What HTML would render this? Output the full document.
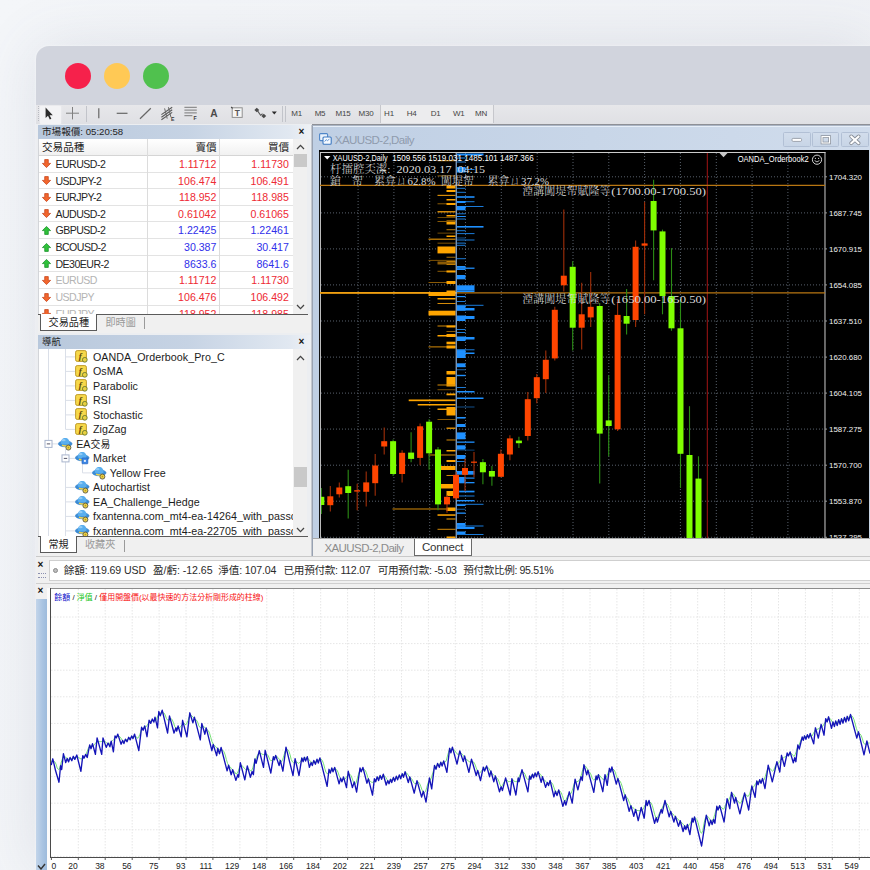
<!DOCTYPE html>
<html lang="zh-Hant">
<head>
<meta charset="utf-8">
<title>MT4 OANDA Orderbook</title>
<style>
html,body{margin:0;padding:0;background:#f2f4f7;}
body{width:870px;height:870px;overflow:hidden;position:relative;font-family:"Liberation Sans","Noto Sans CJK TC",sans-serif;color:#222;}
.abs{position:absolute;}
#root{position:absolute;left:0;top:0;width:870px;height:870px;overflow:hidden;background:linear-gradient(100deg,#f4f6f9 0%,#f2f4f7 40%,#eff1f5 100%);}
#win{position:absolute;left:36px;top:46px;width:834px;height:824px;border-top-left-radius:13px;background:#d1d4dd;box-shadow:0 0 3px rgba(255,255,255,.6),0 0 60px rgba(90,100,125,.14);}
.dot{position:absolute;width:26px;height:26px;border-radius:50%;top:63px;}
#toolbar{left:36px;top:104.5px;width:834px;height:19.5px;background:linear-gradient(180deg,#e7e7ea,#dfe0e4);}
.tf{position:absolute;top:108.5px;font-size:8px;color:#444;transform:translateX(-50%);white-space:nowrap;letter-spacing:-.2px;line-height:9px;}
.ptitle{position:absolute;left:38px;width:273px;height:14px;background:linear-gradient(90deg,#b8c8dc 0%,#c6d3e4 55%,#e1e8f1 92%,#eef1f5 100%);font-size:9.6px;line-height:14px;color:#1e1e1e;white-space:nowrap;}
.ptitle span{position:absolute;left:4px;top:0;}
.px{position:absolute;font-size:10px;font-weight:bold;color:#111;line-height:10px;}
.mw-row{position:absolute;left:38px;width:255px;height:16.65px;border-bottom:1px solid #e3e3e3;box-sizing:border-box;font-size:10.6px;line-height:16.4px;white-space:nowrap;background:#fff;color:#262626;}
.mw-row .sym{position:absolute;left:17.5px;top:0;letter-spacing:-.55px;}
.mw-row .bid{position:absolute;right:76.6px;top:0;}
.mw-row .ask{position:absolute;right:4.2px;top:0;}
.red{color:#ee2a33}.blu{color:#3030ea}.gry{color:#b4b4b4}
.tab-act{position:absolute;background:#fff;border:1px solid #5a5a5a;border-top:none;box-sizing:border-box;font-size:10.1px;text-align:center;white-space:nowrap;}
.tab-in{position:absolute;font-size:10.1px;color:#9a9a9a;white-space:nowrap;}
.nav-t{position:absolute;font-size:10.7px;line-height:14px;white-space:nowrap;color:#1c1c1c;letter-spacing:.05px;}
.sb{position:absolute;background:#f0f0f0;}
.thumb{position:absolute;background:#c9c9c9;}
</style>
</head>
<body>
<div id="root">
<div id="win"></div>
<div class="dot" style="left:65px;background:#f6214b"></div>
<div class="dot" style="left:104px;background:#ffc955"></div>
<div class="dot" style="left:142.5px;background:#50c14e"></div>

<!-- toolbar -->
<div id="toolbar" class="abs"></div>
<div class="abs" style="left:311px;top:123.6px;width:559px;height:1.2px;background:#8e9096"></div>
<div class="abs" style="left:40px;top:105.5px;width:21px;height:18px;background:#f3f3f5;border-radius:1px;box-shadow:0 0 2px #f3f3f5"></div>
<div class="abs" style="left:379.5px;top:105px;width:114px;height:18px;background:#ececee;border-left:1px solid #c6c7cc;border-right:1px solid #c6c7cc;box-sizing:border-box"></div>
<svg class="abs" style="left:36px;top:104px" width="270" height="20" viewBox="36 104 270 20">
<path d="M38.5 106v16" stroke="#b9bbc2" stroke-width="1" stroke-dasharray="1 1"/>
<path d="M86.5 106v16" stroke="#c2c4ca" stroke-width="1"/>
<path d="M282.5 106v16M285.5 106v16" stroke="#c2c4ca" stroke-width="1"/>
<path d="M45.6 107.6v10.4l2.4-2.2 1.8 3.8 1.6-.8-1.8-3.6h3.2z" fill="#2c2c2c"/>
<path d="M72.5 107v12.4M66 113.2h13" stroke="#808080" stroke-width="1"/>
<path d="M98.8 108.2v10" stroke="#666" stroke-width="1.2"/>
<path d="M116.7 113.3h10.8" stroke="#666" stroke-width="1.2"/>
<path d="M140 118.7l10.8-10.5" stroke="#666" stroke-width="1.2"/>
<path d="M161.4 114.6l10.8-7.4M161.4 117.2l10.8-7.4M161.4 119.8l10.8-7.4" stroke="#5a5a5a" stroke-width="1.15"/>
<path d="M164.6 108.4l2.6 10.2M168.4 107.2l2.6 10.2" stroke="#6a6a6a" stroke-width="1"/>
<text x="171" y="120.6" font-family='"Liberation Sans","Noto Sans CJK TC",sans-serif' font-size="5.2" font-weight="bold" fill="#3a3a3a">E</text>
<path d="M184.4 107.3h12.4M184.4 110.1h12.4M184.4 112.9h12.4M184.4 115.7h8" stroke="#7a7a7a" stroke-width="1"/>
<text x="193.4" y="120.2" font-family='"Liberation Sans","Noto Sans CJK TC",sans-serif' font-size="5.2" font-weight="bold" fill="#3a3a3a">F</text>
<text x="213.9" y="117.2" text-anchor="middle" font-family='"Liberation Sans","Noto Sans CJK TC",sans-serif' font-size="10.2" font-weight="bold" fill="#4a4a4a">A</text>
<rect x="232.2" y="107.8" width="10" height="9.6" fill="#f6f6f6" stroke="#909090" stroke-width="1"/>
<text x="237.2" y="116" text-anchor="middle" font-family='"Liberation Sans","Noto Sans CJK TC",sans-serif' font-size="8.4" font-weight="bold" fill="#555">T</text>
<path d="M231.2 107l1.4 1.4" stroke="#444" stroke-width="1.2"/>
<path d="M254.4 110l2.4-2.2 2.4 2.2-2.4 2.2z" fill="#4a4a4a"/><path d="M261.4 116l2.4-2.2 2.4 2.2-2.4 2.2z" fill="#4a4a4a"/>
<path d="M257.4 110.6l3.2 4.6 2-1.4" stroke="#5a5a5a" stroke-width="1.1" fill="none"/>
<path d="M271.8 111.6h5l-2.5 2.8z" fill="#2a2a2a"/>
</svg>
<div class="tf" style="left:296.7px">M1</div>
<div class="tf" style="left:320px">M5</div>
<div class="tf" style="left:343px">M15</div>
<div class="tf" style="left:366px">M30</div>
<div class="tf" style="left:389px">H1</div>
<div class="tf" style="left:411.7px">H4</div>
<div class="tf" style="left:435.7px">D1</div>
<div class="tf" style="left:458.7px">W1</div>
<div class="tf" style="left:481px">MN</div>

<!-- market watch -->
<div class="abs" style="left:36px;top:124px;width:275.5px;height:432px;background:#eceef1"></div>
<div class="ptitle" style="top:125.2px;height:13.4px"><span>市場報價: 05:20:58</span></div>
<div class="px" style="left:298.6px;top:127.4px">×</div>
<div class="abs" style="left:38px;top:138.8px;width:255.3px;height:17.1px;background:linear-gradient(180deg,#fff,#f1f1f1);border-bottom:1px solid #d5d5d5;box-sizing:border-box;font-size:10.6px;line-height:17px;white-space:nowrap"><span class="abs" style="left:4px">交易品種</span><span class="abs" style="right:76.6px">賣價</span><span class="abs" style="right:4.2px">買價</span></div>
<div class="abs" style="left:0;top:155.9px;width:311px;height:158.2px;overflow:hidden">
<div class="mw-row" style="top:0.00px"><svg class="abs" style="left:4px;top:3.6px" width="9" height="9" viewBox="0 0 9 9"><path d="M4.5 8.6L.4 4.4H2.7V.6H6.3V4.4H8.6z" fill="#f2662c" stroke="#c23a10" stroke-width=".7"/></svg><span class="sym">EURUSD-2</span><span class="bid red">1.11712</span><span class="ask red">1.11730</span></div>
<div class="mw-row" style="top:16.65px"><svg class="abs" style="left:4px;top:3.6px" width="9" height="9" viewBox="0 0 9 9"><path d="M4.5 8.6L.4 4.4H2.7V.6H6.3V4.4H8.6z" fill="#f2662c" stroke="#c23a10" stroke-width=".7"/></svg><span class="sym">USDJPY-2</span><span class="bid red">106.474</span><span class="ask red">106.491</span></div>
<div class="mw-row" style="top:33.30px"><svg class="abs" style="left:4px;top:3.6px" width="9" height="9" viewBox="0 0 9 9"><path d="M4.5 8.6L.4 4.4H2.7V.6H6.3V4.4H8.6z" fill="#f2662c" stroke="#c23a10" stroke-width=".7"/></svg><span class="sym">EURJPY-2</span><span class="bid red">118.952</span><span class="ask red">118.985</span></div>
<div class="mw-row" style="top:49.95px"><svg class="abs" style="left:4px;top:3.6px" width="9" height="9" viewBox="0 0 9 9"><path d="M4.5 8.6L.4 4.4H2.7V.6H6.3V4.4H8.6z" fill="#f2662c" stroke="#c23a10" stroke-width=".7"/></svg><span class="sym">AUDUSD-2</span><span class="bid red">0.61042</span><span class="ask red">0.61065</span></div>
<div class="mw-row" style="top:66.60px"><svg class="abs" style="left:4px;top:3.6px" width="9" height="9" viewBox="0 0 9 9"><path d="M4.5 .4L8.6 4.6H6.3V8.4H2.7V4.6H.4z" fill="#2fc23a" stroke="#118a22" stroke-width=".7"/></svg><span class="sym">GBPUSD-2</span><span class="bid blu">1.22425</span><span class="ask blu">1.22461</span></div>
<div class="mw-row" style="top:83.25px"><svg class="abs" style="left:4px;top:3.6px" width="9" height="9" viewBox="0 0 9 9"><path d="M4.5 .4L8.6 4.6H6.3V8.4H2.7V4.6H.4z" fill="#2fc23a" stroke="#118a22" stroke-width=".7"/></svg><span class="sym">BCOUSD-2</span><span class="bid blu">30.387</span><span class="ask blu">30.417</span></div>
<div class="mw-row" style="top:99.90px"><svg class="abs" style="left:4px;top:3.6px" width="9" height="9" viewBox="0 0 9 9"><path d="M4.5 .4L8.6 4.6H6.3V8.4H2.7V4.6H.4z" fill="#2fc23a" stroke="#118a22" stroke-width=".7"/></svg><span class="sym">DE30EUR-2</span><span class="bid blu">8633.6</span><span class="ask blu">8641.6</span></div>
<div class="mw-row" style="top:116.55px"><svg class="abs" style="left:4px;top:3.6px" width="9" height="9" viewBox="0 0 9 9"><path d="M4.5 8.6L.4 4.4H2.7V.6H6.3V4.4H8.6z" fill="#f2662c" stroke="#c23a10" stroke-width=".7"/></svg><span class="sym gry">EURUSD</span><span class="bid red">1.11712</span><span class="ask red">1.11730</span></div>
<div class="mw-row" style="top:133.20px"><svg class="abs" style="left:4px;top:3.6px" width="9" height="9" viewBox="0 0 9 9"><path d="M4.5 8.6L.4 4.4H2.7V.6H6.3V4.4H8.6z" fill="#f2662c" stroke="#c23a10" stroke-width=".7"/></svg><span class="sym gry">USDJPY</span><span class="bid red">106.476</span><span class="ask red">106.492</span></div>
<div class="mw-row" style="top:149.85px"><svg class="abs" style="left:4px;top:3.6px" width="9" height="9" viewBox="0 0 9 9"><path d="M4.5 8.6L.4 4.4H2.7V.6H6.3V4.4H8.6z" fill="#f2662c" stroke="#c23a10" stroke-width=".7"/></svg><span class="sym gry">EURJPY</span><span class="bid red">118.952</span><span class="ask red">118.985</span></div>
</div>
<div class="abs" style="left:147.4px;top:139px;width:1px;height:175px;background:#dcdcdc"></div>
<div class="abs" style="left:219.4px;top:139px;width:1px;height:175px;background:#dcdcdc"></div>
<div class="sb" style="left:293.3px;top:138.8px;width:13.8px;height:175.5px"></div>
<div class="thumb" style="left:294px;top:154px;width:12.6px;height:13px"></div>
<svg class="abs" style="left:296px;top:143px" width="9" height="8" viewBox="0 0 9 8"><path d="M1 6l3.5-3.6L8 6" fill="none" stroke="#444" stroke-width="1.3"/></svg>
<svg class="abs" style="left:296px;top:302.5px" width="9" height="8" viewBox="0 0 9 8"><path d="M1 2l3.5 3.6L8 2" fill="none" stroke="#444" stroke-width="1.3"/></svg>
<div class="abs" style="left:38px;top:314.3px;width:273px;height:18.5px;background:#f0f0f0"></div>
<div class="abs" style="left:38px;top:313.8px;width:269.5px;height:1px;background:#5a5a5a"></div>
<div class="tab-act" style="left:40.3px;top:313.8px;width:57px;height:16.9px;line-height:17px">交易品種</div>
<div class="tab-in" style="left:105.5px;top:316px;line-height:14px">即時圖</div>
<div class="abs" style="left:144px;top:317px;width:1px;height:12px;background:#9a9a9a"></div>

<!-- navigator -->
<div class="ptitle" style="top:335.3px;height:13.6px"><span>導航</span></div>
<div class="px" style="left:298.6px;top:337px">×</div>
<div class="abs" style="left:38px;top:349px;width:255.3px;height:187px;background:#fff;overflow:hidden"></div>
<svg class="abs" style="left:38px;top:349px" width="256" height="187" viewBox="38 349 256 187"><g stroke="#dadfe8" stroke-width="1" fill="none"><path d="M65.5 349V429.4M65.5 356.9H75M65.5 371.4H75M65.5 385.9H75M65.5 400.4H75M65.5 414.9H75M65.5 429.4H75"/><path d="M48.5 349V536M52 443.9H58"/><path d="M65.5 449V536M69 458.4H75M82.5 464V472.9H92M65.5 487.4H75M65.5 501.9H75M65.5 516.4H75M65.5 530.9H75"/></g><rect x="45" y="440.4" width="7" height="7" fill="#fff" stroke="#a8b4cc" stroke-width="1"/><path d="M46.8 443.9h3.4" stroke="#556" stroke-width="1"/><rect x="62" y="454.9" width="7" height="7" fill="#fff" stroke="#a8b4cc" stroke-width="1"/><path d="M63.8 458.4h3.4" stroke="#556" stroke-width="1"/></svg>
<div class="abs" style="left:0;top:349px;width:293.3px;height:187px;overflow:hidden">
<svg class="abs" style="left:75px;top:1.3999999999999773px" width="13" height="13" viewBox="0 0 13 13"><rect x=".6" y=".6" width="10.8" height="10.8" rx="1.6" fill="#f7d84a" stroke="#b89420" stroke-width=".9"/><text x="5.2" y="9" text-anchor="middle" font-family='"Liberation Serif",serif' font-style="italic" font-weight="bold" font-size="9" fill="#5a4608">f</text><circle cx="9.8" cy="9.8" r="2.4" fill="#e8d040" stroke="#6a7a30" stroke-width=".9"/></svg>
<div class="nav-t" style="left:93px;top:0.5px">OANDA_Orderbook_Pro_C</div>
<svg class="abs" style="left:75px;top:15.899999999999977px" width="13" height="13" viewBox="0 0 13 13"><rect x=".6" y=".6" width="10.8" height="10.8" rx="1.6" fill="#f7d84a" stroke="#b89420" stroke-width=".9"/><text x="5.2" y="9" text-anchor="middle" font-family='"Liberation Serif",serif' font-style="italic" font-weight="bold" font-size="9" fill="#5a4608">f</text><circle cx="9.8" cy="9.8" r="2.4" fill="#e8d040" stroke="#6a7a30" stroke-width=".9"/></svg>
<div class="nav-t" style="left:93px;top:15.0px">OsMA</div>
<svg class="abs" style="left:75px;top:30.399999999999977px" width="13" height="13" viewBox="0 0 13 13"><rect x=".6" y=".6" width="10.8" height="10.8" rx="1.6" fill="#f7d84a" stroke="#b89420" stroke-width=".9"/><text x="5.2" y="9" text-anchor="middle" font-family='"Liberation Serif",serif' font-style="italic" font-weight="bold" font-size="9" fill="#5a4608">f</text><circle cx="9.8" cy="9.8" r="2.4" fill="#e8d040" stroke="#6a7a30" stroke-width=".9"/></svg>
<div class="nav-t" style="left:93px;top:29.5px">Parabolic</div>
<svg class="abs" style="left:75px;top:44.89999999999998px" width="13" height="13" viewBox="0 0 13 13"><rect x=".6" y=".6" width="10.8" height="10.8" rx="1.6" fill="#f7d84a" stroke="#b89420" stroke-width=".9"/><text x="5.2" y="9" text-anchor="middle" font-family='"Liberation Serif",serif' font-style="italic" font-weight="bold" font-size="9" fill="#5a4608">f</text><circle cx="9.8" cy="9.8" r="2.4" fill="#e8d040" stroke="#6a7a30" stroke-width=".9"/></svg>
<div class="nav-t" style="left:93px;top:44.0px">RSI</div>
<svg class="abs" style="left:75px;top:59.39999999999998px" width="13" height="13" viewBox="0 0 13 13"><rect x=".6" y=".6" width="10.8" height="10.8" rx="1.6" fill="#f7d84a" stroke="#b89420" stroke-width=".9"/><text x="5.2" y="9" text-anchor="middle" font-family='"Liberation Serif",serif' font-style="italic" font-weight="bold" font-size="9" fill="#5a4608">f</text><circle cx="9.8" cy="9.8" r="2.4" fill="#e8d040" stroke="#6a7a30" stroke-width=".9"/></svg>
<div class="nav-t" style="left:93px;top:58.5px">Stochastic</div>
<svg class="abs" style="left:75px;top:73.89999999999998px" width="13" height="13" viewBox="0 0 13 13"><rect x=".6" y=".6" width="10.8" height="10.8" rx="1.6" fill="#f7d84a" stroke="#b89420" stroke-width=".9"/><text x="5.2" y="9" text-anchor="middle" font-family='"Liberation Serif",serif' font-style="italic" font-weight="bold" font-size="9" fill="#5a4608">f</text><circle cx="9.8" cy="9.8" r="2.4" fill="#e8d040" stroke="#6a7a30" stroke-width=".9"/></svg>
<div class="nav-t" style="left:93px;top:73.0px">ZigZag</div>
<svg class="abs" style="left:58px;top:87.89999999999998px" width="15" height="14" viewBox="0 0 15 14"><ellipse cx="7.2" cy="6.8" rx="6.9" ry="3" fill="#3a8cd6" stroke="#2a78c4" stroke-width=".5"/><path d="M2.8 6.4C2.6 3 4.6 1 7.2 1s4.6 2 4.4 5.4c-1.6 1.3-7.200 1.300-8.800 0z" fill="#59aeee"/><ellipse cx="5.6" cy="3.2" rx="2" ry="1.1" fill="#9fd2f8" opacity=".8"/><path d="M4 8.200c1.800.9 4.600.9 6.400 0" stroke="#eed24c" stroke-width="1.400" fill="none"/><circle cx="10.4" cy="10.6" r="2.5" fill="#ecd044" stroke="#5c5a48" stroke-width=".9"/><circle cx="10.4" cy="10.6" r=".8" fill="#b89a20"/></svg>
<div class="nav-t" style="left:76.2px;top:87.5px">EA<span style="font-size:9.8px">交易</span></div>
<svg class="abs" style="left:75px;top:102.39999999999998px" width="15" height="14" viewBox="0 0 15 14"><ellipse cx="7.2" cy="6.8" rx="6.9" ry="3" fill="#3a8cd6" stroke="#2a78c4" stroke-width=".5"/><path d="M2.8 6.4C2.6 3 4.6 1 7.2 1s4.6 2 4.4 5.4c-1.6 1.3-7.200 1.300-8.800 0z" fill="#59aeee"/><ellipse cx="5.6" cy="3.2" rx="2" ry="1.1" fill="#9fd2f8" opacity=".8"/><path d="M4 8.200c1.800.9 4.600.9 6.400 0" stroke="#eed24c" stroke-width="1.400" fill="none"/><rect x="7" y="7" width="5.8" height="5.8" rx=".6" fill="#3a86e4" stroke="#2060c0" stroke-width=".7"/><rect x="8.9" y="8.9" width="2" height="2" fill="#e6eefc"/></svg>
<div class="nav-t" style="left:93px;top:102.0px">Market</div>
<svg class="abs" style="left:91.6px;top:116.89999999999998px" width="15" height="14" viewBox="0 0 15 14"><ellipse cx="7.2" cy="6.8" rx="6.9" ry="3" fill="#3a8cd6" stroke="#2a78c4" stroke-width=".5"/><path d="M2.8 6.4C2.6 3 4.6 1 7.2 1s4.6 2 4.4 5.4c-1.6 1.3-7.200 1.300-8.800 0z" fill="#59aeee"/><ellipse cx="5.6" cy="3.2" rx="2" ry="1.1" fill="#9fd2f8" opacity=".8"/><path d="M4 8.200c1.800.9 4.600.9 6.400 0" stroke="#eed24c" stroke-width="1.400" fill="none"/><circle cx="10.4" cy="10.6" r="2.5" fill="#ecd044" stroke="#5c5a48" stroke-width=".9"/><circle cx="10.4" cy="10.6" r=".8" fill="#b89a20"/></svg>
<div class="nav-t" style="left:109.7px;top:116.5px">Yellow Free</div>
<svg class="abs" style="left:75px;top:131.39999999999998px" width="15" height="14" viewBox="0 0 15 14"><ellipse cx="7.2" cy="6.8" rx="6.9" ry="3" fill="#3a8cd6" stroke="#2a78c4" stroke-width=".5"/><path d="M2.8 6.4C2.6 3 4.6 1 7.2 1s4.6 2 4.4 5.4c-1.6 1.3-7.200 1.300-8.800 0z" fill="#59aeee"/><ellipse cx="5.6" cy="3.2" rx="2" ry="1.1" fill="#9fd2f8" opacity=".8"/><path d="M4 8.200c1.800.9 4.600.9 6.400 0" stroke="#eed24c" stroke-width="1.400" fill="none"/><circle cx="10.4" cy="10.6" r="2.5" fill="#ecd044" stroke="#5c5a48" stroke-width=".9"/><circle cx="10.4" cy="10.6" r=".8" fill="#b89a20"/></svg>
<div class="nav-t" style="left:93px;top:131.0px">Autochartist</div>
<svg class="abs" style="left:75px;top:145.89999999999998px" width="15" height="14" viewBox="0 0 15 14"><ellipse cx="7.2" cy="6.8" rx="6.9" ry="3" fill="#3a8cd6" stroke="#2a78c4" stroke-width=".5"/><path d="M2.8 6.4C2.6 3 4.6 1 7.2 1s4.6 2 4.4 5.4c-1.6 1.3-7.200 1.300-8.800 0z" fill="#59aeee"/><ellipse cx="5.6" cy="3.2" rx="2" ry="1.1" fill="#9fd2f8" opacity=".8"/><path d="M4 8.200c1.800.9 4.600.9 6.400 0" stroke="#eed24c" stroke-width="1.400" fill="none"/><circle cx="10.4" cy="10.6" r="2.5" fill="#ecd044" stroke="#5c5a48" stroke-width=".9"/><circle cx="10.4" cy="10.6" r=".8" fill="#b89a20"/></svg>
<div class="nav-t" style="left:93px;top:145.5px">EA_Challenge_Hedge</div>
<svg class="abs" style="left:75px;top:160.39999999999998px" width="15" height="14" viewBox="0 0 15 14"><ellipse cx="7.2" cy="6.8" rx="6.9" ry="3" fill="#3a8cd6" stroke="#2a78c4" stroke-width=".5"/><path d="M2.8 6.4C2.6 3 4.6 1 7.2 1s4.6 2 4.4 5.4c-1.6 1.3-7.200 1.300-8.800 0z" fill="#59aeee"/><ellipse cx="5.6" cy="3.2" rx="2" ry="1.1" fill="#9fd2f8" opacity=".8"/><path d="M4 8.200c1.800.9 4.600.9 6.400 0" stroke="#eed24c" stroke-width="1.400" fill="none"/><circle cx="10.4" cy="10.6" r="2.5" fill="#ecd044" stroke="#5c5a48" stroke-width=".9"/><circle cx="10.4" cy="10.6" r=".8" fill="#b89a20"/></svg>
<div class="nav-t" style="left:93px;top:160.0px">fxantenna.com_mt4-ea-14264_with_passc</div>
<svg class="abs" style="left:75px;top:174.89999999999998px" width="15" height="14" viewBox="0 0 15 14"><ellipse cx="7.2" cy="6.8" rx="6.9" ry="3" fill="#3a8cd6" stroke="#2a78c4" stroke-width=".5"/><path d="M2.8 6.4C2.6 3 4.6 1 7.2 1s4.6 2 4.4 5.4c-1.6 1.3-7.200 1.300-8.800 0z" fill="#59aeee"/><ellipse cx="5.6" cy="3.2" rx="2" ry="1.1" fill="#9fd2f8" opacity=".8"/><path d="M4 8.200c1.800.9 4.600.9 6.400 0" stroke="#eed24c" stroke-width="1.400" fill="none"/><circle cx="10.4" cy="10.6" r="2.5" fill="#ecd044" stroke="#5c5a48" stroke-width=".9"/><circle cx="10.4" cy="10.6" r=".8" fill="#b89a20"/></svg>
<div class="nav-t" style="left:93px;top:174.5px">fxantenna.com_mt4-ea-22705_with_passc</div>
</div>
<div class="sb" style="left:293.3px;top:349px;width:13.8px;height:187px"></div>
<div class="thumb" style="left:294px;top:466.5px;width:12.6px;height:20px"></div>
<svg class="abs" style="left:296px;top:353.5px" width="9" height="8" viewBox="0 0 9 8"><path d="M1 6l3.5-3.6L8 6" fill="none" stroke="#444" stroke-width="1.3"/></svg>
<svg class="abs" style="left:296px;top:525.5px" width="9" height="8" viewBox="0 0 9 8"><path d="M1 2l3.5 3.6L8 2" fill="none" stroke="#444" stroke-width="1.3"/></svg>
<div class="abs" style="left:38px;top:536px;width:273px;height:19.5px;background:#f0f0f0"></div>
<div class="abs" style="left:38px;top:535.6px;width:269.5px;height:1px;background:#5a5a5a"></div>
<div class="tab-act" style="left:40px;top:535.6px;width:37px;height:17.2px;line-height:17.4px">常規</div>
<div class="tab-in" style="left:85px;top:537.5px;line-height:14px">收藏夾</div>
<div class="abs" style="left:124px;top:539.5px;width:1px;height:12px;background:#9a9a9a"></div>
<div class="abs" style="left:37.7px;top:139px;width:1px;height:175px;background:#d3d5d9"></div>
<div class="abs" style="left:37.7px;top:349px;width:1px;height:187px;background:#d3d5d9"></div>
<div class="abs" style="left:310.6px;top:124.6px;width:1px;height:431px;background:#c3c7cf"></div>

<!-- chart window -->
<div class="abs" style="left:311.6px;top:124.6px;width:559px;height:432px;background:linear-gradient(90deg,#bfcfe4 0%,#c8d6e8 50%,#d0dcec 100%);border-left:1px solid #98a2b2;border-top:1px solid #a9b4c4;box-sizing:border-box"></div>
<div class="abs" style="left:312.6px;top:125.6px;width:558px;height:1px;background:#e6eef8"></div>
<svg class="abs" style="left:318.5px;top:133px" width="13" height="12" viewBox="0 0 13 12"><rect x=".6" y=".6" width="8" height="7" rx="1" fill="#eaf2fc" stroke="#4f86c8" stroke-width="1.1"/><rect x="4" y="4" width="8.2" height="7.2" rx="1" fill="#f6faff" stroke="#3d78c0" stroke-width="1.1"/><path d="M5.6 8.6l1.6-2 1.4 1.2 1.8-2" stroke="#5a8fd0" stroke-width=".9" fill="none"/></svg>
<div class="abs" style="left:334.8px;top:132.6px;font-size:11.5px;line-height:14px;color:#8f9bad;white-space:nowrap;letter-spacing:-.56px" id="ctitle">XAUUSD-2,Daily</div>
<div class="abs" style="left:783.4px;top:132px;width:27.2px;height:15.2px;background:linear-gradient(180deg,#d2ddec,#c8d5e6);border:1px solid #b2c0d5;border-radius:1.5px;box-sizing:border-box"></div>
<div class="abs" style="left:812.4px;top:132px;width:27px;height:15.2px;background:linear-gradient(180deg,#d2ddec,#c8d5e6);border:1px solid #b2c0d5;border-radius:1.5px;box-sizing:border-box"></div>
<div class="abs" style="left:841px;top:132px;width:27.6px;height:15.2px;background:linear-gradient(180deg,#d2ddec,#c8d5e6);border:1px solid #b2c0d5;border-radius:1.5px;box-sizing:border-box"></div>
<svg class="abs" style="left:783px;top:132px" width="87" height="16" viewBox="783 132 87 16"><rect x="792" y="138.4" width="9.6" height="3" rx="1.2" fill="#fff" stroke="#8a909a" stroke-width=".8"/><rect x="822" y="136.6" width="7.6" height="6.4" fill="none" stroke="#868c96" stroke-width="2.6"/><rect x="822" y="136.6" width="7.6" height="6.4" fill="none" stroke="#fff" stroke-width="1.2"/><path d="M851.2 136.4l7.4 6.8M858.6 136.4l-7.4 6.8" stroke="#868c96" stroke-width="3.8" stroke-linecap="round"/><path d="M851.2 136.4l7.4 6.8M858.6 136.4l-7.4 6.8" stroke="#fff" stroke-width="2.1" stroke-linecap="round"/></svg>
<svg class="abs" style="left:319px;top:150px" width="551" height="388.4" viewBox="319 150 551 388.4">
<rect x="319" y="150" width="551" height="388.4" fill="#000"/>
<path d="M787.9 153V539 M752.1 153V539 M716.3 153V539 M680.4 153V539 M644.6 153V539 M608.8 153V539 M573.0 153V539 M537.2 153V539 M501.3 153V539 M465.5 153V539 M429.7 153V539 M393.9 153V539 M358.1 153V539 M321 176.8H825 M321 212.9H825 M321 248.9H825 M321 284.9H825 M321 321.0H825 M321 357.1H825 M321 393.1H825 M321 429.1H825 M321 465.2H825 M321 501.2H825 M321 537.3H825" stroke="#59626d" stroke-width="1" stroke-dasharray="1 2" fill="none"/>
<path d="M320 152.5H825.5M825 152V539M320.4 152V539" stroke="#cfcfcf" stroke-width="1" fill="none"/>
<path d="M825 176.8h2" stroke="#9a9a9a" stroke-width="1"/>
<text x="829" y="179.8" font-family='"Liberation Sans","Noto Sans CJK TC",sans-serif' font-size="7.9" fill="#f0f0f0" textLength="33" lengthAdjust="spacingAndGlyphs">1704.320</text>
<path d="M825 212.9h2" stroke="#9a9a9a" stroke-width="1"/>
<text x="829" y="215.9" font-family='"Liberation Sans","Noto Sans CJK TC",sans-serif' font-size="7.9" fill="#f0f0f0" textLength="33" lengthAdjust="spacingAndGlyphs">1687.745</text>
<path d="M825 248.9h2" stroke="#9a9a9a" stroke-width="1"/>
<text x="829" y="251.9" font-family='"Liberation Sans","Noto Sans CJK TC",sans-serif' font-size="7.9" fill="#f0f0f0" textLength="33" lengthAdjust="spacingAndGlyphs">1670.915</text>
<path d="M825 284.9h2" stroke="#9a9a9a" stroke-width="1"/>
<text x="829" y="287.9" font-family='"Liberation Sans","Noto Sans CJK TC",sans-serif' font-size="7.9" fill="#f0f0f0" textLength="33" lengthAdjust="spacingAndGlyphs">1654.085</text>
<path d="M825 321.0h2" stroke="#9a9a9a" stroke-width="1"/>
<text x="829" y="324.0" font-family='"Liberation Sans","Noto Sans CJK TC",sans-serif' font-size="7.9" fill="#f0f0f0" textLength="33" lengthAdjust="spacingAndGlyphs">1637.510</text>
<path d="M825 357.1h2" stroke="#9a9a9a" stroke-width="1"/>
<text x="829" y="360.1" font-family='"Liberation Sans","Noto Sans CJK TC",sans-serif' font-size="7.9" fill="#f0f0f0" textLength="33" lengthAdjust="spacingAndGlyphs">1620.680</text>
<path d="M825 393.1h2" stroke="#9a9a9a" stroke-width="1"/>
<text x="829" y="396.1" font-family='"Liberation Sans","Noto Sans CJK TC",sans-serif' font-size="7.9" fill="#f0f0f0" textLength="33" lengthAdjust="spacingAndGlyphs">1604.105</text>
<path d="M825 429.1h2" stroke="#9a9a9a" stroke-width="1"/>
<text x="829" y="432.1" font-family='"Liberation Sans","Noto Sans CJK TC",sans-serif' font-size="7.9" fill="#f0f0f0" textLength="33" lengthAdjust="spacingAndGlyphs">1587.275</text>
<path d="M825 465.2h2" stroke="#9a9a9a" stroke-width="1"/>
<text x="829" y="468.2" font-family='"Liberation Sans","Noto Sans CJK TC",sans-serif' font-size="7.9" fill="#f0f0f0" textLength="33" lengthAdjust="spacingAndGlyphs">1570.700</text>
<path d="M825 501.2h2" stroke="#9a9a9a" stroke-width="1"/>
<text x="829" y="504.2" font-family='"Liberation Sans","Noto Sans CJK TC",sans-serif' font-size="7.9" fill="#f0f0f0" textLength="33" lengthAdjust="spacingAndGlyphs">1553.870</text>
<path d="M825 537.3h2" stroke="#9a9a9a" stroke-width="1"/>
<text x="829" y="540.3" font-family='"Liberation Sans","Noto Sans CJK TC",sans-serif' font-size="7.9" fill="#f0f0f0" textLength="33" lengthAdjust="spacingAndGlyphs">1537.295</text>
<path d="M707.3 153V539" stroke="#a41414" stroke-width="1"/>
<path d="M320 185.4H825M320 292.9H825" stroke="#b87612" stroke-width="1.1"/>
<path d="M320 292.9H456" stroke="#f0a010" stroke-width="1.8"/>
<rect x="437.5" y="160.2" width="18.0" height="1.0" fill="#d48a08"/>
<rect x="437.5" y="175.4" width="18.0" height="1.0" fill="#8a5a06"/>
<rect x="446.5" y="186" width="9.0" height="2.5" fill="#ffa500"/>
<rect x="446.5" y="190" width="9.0" height="2.0" fill="#ffa500"/>
<rect x="437.5" y="194.8" width="18.0" height="1.2" fill="#d48a08"/>
<rect x="446.5" y="199" width="9.0" height="1.5" fill="#ffa500"/>
<rect x="437.5" y="203.3" width="18.0" height="1.0" fill="#8a5a06"/>
<rect x="446.5" y="203" width="9.0" height="2.0" fill="#ffa500"/>
<rect x="437.5" y="211" width="18.0" height="1.5" fill="#d48a08"/>
<rect x="446.5" y="215" width="9.0" height="1.5" fill="#ffa500"/>
<rect x="437.5" y="217.2" width="18.0" height="0.8" fill="#8a5a06"/>
<rect x="446.5" y="220.5" width="9.0" height="4.0" fill="#ffa500"/>
<rect x="437.5" y="221" width="18.0" height="1.0" fill="#8a5a06"/>
<rect x="446.5" y="229.3" width="9.0" height="0.9" fill="#d48a08"/>
<rect x="437.5" y="232.7" width="18.0" height="0.8" fill="#8a5a06"/>
<rect x="446.5" y="235.5" width="9.0" height="1.5" fill="#ffa500"/>
<rect x="428.5" y="238.6" width="27.0" height="1.2" fill="#d48a08"/>
<rect x="437.5" y="242.7" width="18.0" height="0.9" fill="#8a5a06"/>
<rect x="437.5" y="246.5" width="18.0" height="6.9" fill="#ffa500"/>
<rect x="446.5" y="256.8" width="9.0" height="0.8" fill="#d48a08"/>
<rect x="428.5" y="259.9" width="27.0" height="0.9" fill="#8a5a06"/>
<rect x="446.5" y="261" width="9.0" height="4.0" fill="#ffa500"/>
<rect x="437.5" y="261.5" width="18.0" height="3.0" fill="#8a5a06"/>
<rect x="437.5" y="270.8" width="18.0" height="1.0" fill="#8a5a06"/>
<rect x="446.5" y="270.5" width="9.0" height="2.0" fill="#ffa500"/>
<rect x="428.5" y="282" width="27.0" height="1.0" fill="#8a5a06"/>
<rect x="446.5" y="281" width="9.0" height="3.0" fill="#ffa500"/>
<rect x="446.5" y="290.5" width="9.0" height="1.5" fill="#ffa500"/>
<rect x="428.5" y="292" width="27.0" height="4.0" fill="#ffa500"/>
<rect x="437.5" y="298" width="18.0" height="1.5" fill="#ffa500"/>
<rect x="437.5" y="303" width="18.0" height="1.0" fill="#d48a08"/>
<rect x="428.5" y="310.7" width="27.0" height="4.8" fill="#ffa500"/>
<rect x="437.5" y="325.5" width="18.0" height="1.0" fill="#d48a08"/>
<rect x="446.5" y="325.5" width="9.0" height="2.0" fill="#ffa500"/>
<rect x="446.5" y="331" width="9.0" height="1.0" fill="#8a5a06"/>
<rect x="446.5" y="334" width="9.0" height="3.0" fill="#ffa500"/>
<rect x="437.5" y="335" width="18.0" height="1.5" fill="#ffa500"/>
<rect x="446.5" y="341.7" width="9.0" height="2.6" fill="#ffa500"/>
<rect x="428.5" y="346.4" width="27.0" height="1.0" fill="#d48a08"/>
<rect x="446.5" y="345.5" width="9.0" height="3.0" fill="#ffa500"/>
<rect x="446.5" y="371" width="9.0" height="3.5" fill="#ffa500"/>
<rect x="446.5" y="377" width="9.0" height="9.5" fill="#ffa500"/>
<rect x="437.5" y="384.5" width="18.0" height="1.0" fill="#d48a08"/>
<rect x="437.5" y="389.3" width="18.0" height="0.9" fill="#8a5a06"/>
<rect x="446.5" y="393.5" width="9.0" height="1.8" fill="#ffa500"/>
<rect x="408.7" y="399.5" width="46.8" height="1.7" fill="#ffa500"/>
<rect x="417.7" y="404" width="37.8" height="1.5" fill="#ffa500"/>
<rect x="446.5" y="407" width="9.0" height="8.5" fill="#ffa500"/>
<rect x="437.5" y="408.5" width="18.0" height="1.5" fill="#ffa500"/>
<rect x="437.5" y="419" width="18.0" height="1.0" fill="#8a5a06"/>
<rect x="446.5" y="427.5" width="9.0" height="1.5" fill="#d48a08"/>
<rect x="446.5" y="439.5" width="9.0" height="1.0" fill="#d48a08"/>
<rect x="446.5" y="450" width="9.0" height="1.5" fill="#ffa500"/>
<rect x="428.5" y="454.5" width="27.0" height="1.0" fill="#d48a08"/>
<rect x="446.5" y="460" width="9.0" height="2.0" fill="#ffa500"/>
<rect x="437.5" y="466" width="18.0" height="4.0" fill="#ffa500"/>
<rect x="446.5" y="475" width="9.0" height="1.0" fill="#d48a08"/>
<rect x="437.5" y="484" width="18.0" height="4.5" fill="#ffa500"/>
<rect x="446.5" y="491" width="9.0" height="5.0" fill="#ffa500"/>
<rect x="392.5" y="508.5" width="63.0" height="1.0" fill="#d48a08"/>
<rect x="446.5" y="507.5" width="9.0" height="3.5" fill="#ffa500"/>
<rect x="437.5" y="514.3" width="18.0" height="1.5" fill="#ffa500"/>
<rect x="446.5" y="518.5" width="9.0" height="1.0" fill="#ffa500"/>
<rect x="437.5" y="528.8" width="18.0" height="1.0" fill="#d48a08"/>
<rect x="446.5" y="536.5" width="9.0" height="2.0" fill="#ffa500"/>
<rect x="457" y="153.5" width="26.5" height="2.0" fill="#1e90ff"/>
<rect x="457" y="157.5" width="8.5" height="1.0" fill="#1e90ff"/>
<rect x="457" y="161.5" width="8.5" height="1.0" fill="#1a7ad8"/>
<rect x="457" y="167" width="8.5" height="5.5" fill="#1e90ff"/>
<rect x="457" y="169" width="17.5" height="1.0" fill="#1a7ad8"/>
<rect x="457" y="187.8" width="8.5" height="1.0" fill="#1a7ad8"/>
<rect x="457" y="191.8" width="8.5" height="1.0" fill="#1a7ad8"/>
<rect x="457" y="196.2" width="17.5" height="1.6" fill="#1e90ff"/>
<rect x="457" y="201.2" width="17.5" height="1.0" fill="#1a7ad8"/>
<rect x="457" y="201" width="8.5" height="2.0" fill="#1e90ff"/>
<rect x="457" y="206" width="26.5" height="1.0" fill="#1a7ad8"/>
<rect x="457" y="206" width="8.5" height="4.3" fill="#1e90ff"/>
<rect x="457" y="213.3" width="8.5" height="1.0" fill="#1a7ad8"/>
<rect x="457" y="216" width="8.5" height="1.0" fill="#1e90ff"/>
<rect x="457" y="218.5" width="8.5" height="1.0" fill="#1a7ad8"/>
<rect x="457" y="226" width="26.5" height="1.6" fill="#1e90ff"/>
<rect x="457" y="230.2" width="8.5" height="1.0" fill="#1a7ad8"/>
<rect x="457" y="233.1" width="17.5" height="1.0" fill="#1a7ad8"/>
<rect x="457" y="237.5" width="8.5" height="1.0" fill="#12508c"/>
<rect x="457" y="239.5" width="17.5" height="1.0" fill="#1a7ad8"/>
<rect x="457" y="242.6" width="8.5" height="1.0" fill="#1a7ad8"/>
<rect x="457" y="244.8" width="8.5" height="1.0" fill="#1a7ad8"/>
<rect x="457" y="258.2" width="8.5" height="1.0" fill="#1a7ad8"/>
<rect x="457" y="266" width="8.5" height="4.0" fill="#1e90ff"/>
<rect x="457" y="267.5" width="17.5" height="1.5" fill="#1a7ad8"/>
<rect x="457" y="275" width="8.5" height="4.3" fill="#1e90ff"/>
<rect x="457" y="285.3" width="17.5" height="5.2" fill="#1e90ff"/>
<rect x="457" y="290.5" width="17.5" height="1.5" fill="#1e90ff"/>
<rect x="457" y="296" width="8.5" height="1.2" fill="#1e90ff"/>
<rect x="457" y="301" width="8.5" height="1.0" fill="#1a7ad8"/>
<rect x="457" y="304.8" width="26.5" height="1.0" fill="#1a7ad8"/>
<rect x="457" y="305.5" width="8.5" height="5.2" fill="#1e90ff"/>
<rect x="457" y="308" width="17.5" height="2.5" fill="#1e90ff"/>
<rect x="457" y="315.5" width="8.5" height="5.5" fill="#1e90ff"/>
<rect x="457" y="316" width="17.5" height="3.0" fill="#1e90ff"/>
<rect x="457" y="329" width="8.5" height="1.0" fill="#1a7ad8"/>
<rect x="457" y="332" width="8.5" height="1.0" fill="#1a7ad8"/>
<rect x="457" y="336.5" width="8.5" height="4.5" fill="#1e90ff"/>
<rect x="457" y="337" width="17.5" height="2.5" fill="#1e90ff"/>
<rect x="457" y="349.5" width="8.5" height="8.5" fill="#1e90ff"/>
<rect x="457" y="349.3" width="17.5" height="1.0" fill="#1a7ad8"/>
<rect x="457" y="352.5" width="17.5" height="1.5" fill="#1e90ff"/>
<rect x="457" y="363.3" width="8.5" height="3.9" fill="#1e90ff"/>
<rect x="457" y="369.4" width="8.5" height="0.8" fill="#1a7ad8"/>
<rect x="457" y="374.8" width="8.5" height="1.4" fill="#1e90ff"/>
<rect x="457" y="387" width="8.5" height="1.0" fill="#1a7ad8"/>
<rect x="457" y="391" width="17.5" height="1.5" fill="#1e90ff"/>
<rect x="457" y="397.5" width="26.5" height="1.5" fill="#1e90ff"/>
<rect x="457" y="406.5" width="17.5" height="1.0" fill="#12508c"/>
<rect x="457" y="417" width="8.5" height="1.6" fill="#1e90ff"/>
<rect x="457" y="424" width="8.5" height="3.0" fill="#1e90ff"/>
<rect x="457" y="432.4" width="8.5" height="6.9" fill="#1e90ff"/>
<rect x="457" y="441.5" width="17.5" height="1.3" fill="#1e90ff"/>
<rect x="457" y="445.3" width="8.5" height="4.4" fill="#1e90ff"/>
<rect x="457" y="449.7" width="17.5" height="0.8" fill="#12508c"/>
<rect x="457" y="455" width="8.5" height="4.0" fill="#1e90ff"/>
<rect x="457" y="461" width="8.5" height="1.0" fill="#1a7ad8"/>
<rect x="457" y="471" width="17.5" height="3.7" fill="#1e90ff"/>
<rect x="457" y="477" width="8.5" height="5.5" fill="#1e90ff"/>
<rect x="457" y="477.5" width="17.5" height="1.2" fill="#1e90ff"/>
<rect x="457" y="482" width="17.5" height="1.3" fill="#1e90ff"/>
<rect x="457" y="490.7" width="17.5" height="1.7" fill="#1e90ff"/>
<rect x="457" y="495.5" width="17.5" height="1.0" fill="#1a7ad8"/>
<rect x="457" y="500" width="17.5" height="1.4" fill="#1e90ff"/>
<rect x="457" y="503.8" width="26.5" height="1.0" fill="#1a7ad8"/>
<rect x="457" y="504.5" width="8.5" height="1.5" fill="#1e90ff"/>
<rect x="457" y="508.8" width="8.5" height="0.8" fill="#1a7ad8"/>
<rect x="457" y="512.5" width="8.5" height="1.3" fill="#1e90ff"/>
<rect x="457" y="523" width="8.5" height="6.0" fill="#1e90ff"/>
<rect x="457" y="527" width="17.5" height="2.0" fill="#1e90ff"/>
<rect x="457" y="525.5" width="26.5" height="1.0" fill="#1a7ad8"/>
<rect x="457" y="531.5" width="8.5" height="3.5" fill="#1e90ff"/>
<rect x="457" y="534" width="26.5" height="1.0" fill="#1a7ad8"/>
<path d="M456.2 153V539" stroke="#a8d0ff" stroke-width="1"/>
<clipPath id="plotclip"><rect x="320.9" y="153" width="504" height="390"/></clipPath><g clip-path="url(#plotclip)">
<path d="M321.3 488V514" stroke="#2b8c14" stroke-width="1.1"/>
<rect x="318.3" y="496.8" width="6" height="8.2" fill="#7fff00"/>
<path d="M330.3 486V511.5" stroke="#a02e08" stroke-width="1.1"/>
<rect x="327.3" y="496.3" width="6" height="8.9" fill="#ff4500"/>
<path d="M339.3 482.4V497.6" stroke="#a02e08" stroke-width="1.1"/>
<rect x="336.3" y="487.5" width="6" height="6.8" fill="#ff4500"/>
<path d="M348.2 469.8V518.6" stroke="#2b8c14" stroke-width="1.1"/>
<rect x="345.2" y="486.2" width="6" height="6.8" fill="#7fff00"/>
<path d="M357.2 483.7V510.2" stroke="#a02e08" stroke-width="1.1"/>
<rect x="354.2" y="490.2" width="6" height="1.4" fill="#ff4500"/>
<path d="M366.2 471.5V506.4" stroke="#a02e08" stroke-width="1.1"/>
<rect x="363.2" y="482.4" width="6" height="9.4" fill="#ff4500"/>
<path d="M375.2 454V495.8" stroke="#a02e08" stroke-width="1.1"/>
<rect x="372.2" y="465.5" width="6" height="17.7" fill="#ff4500"/>
<path d="M384.2 427.5V454.6" stroke="#a02e08" stroke-width="1.1"/>
<rect x="381.2" y="441.2" width="6" height="5.3" fill="#ff4500"/>
<path d="M393.1 439.4V476" stroke="#2b8c14" stroke-width="1.1"/>
<rect x="390.1" y="441.2" width="6" height="32.8" fill="#7fff00"/>
<path d="M402.1 450.3V482.4" stroke="#a02e08" stroke-width="1.1"/>
<rect x="399.1" y="452.8" width="6" height="21.2" fill="#ff4500"/>
<path d="M411.1 432.3V462.2" stroke="#2b8c14" stroke-width="1.1"/>
<rect x="408.1" y="452.6" width="6" height="6.3" fill="#7fff00"/>
<path d="M420.1 423.5V465.2" stroke="#a02e08" stroke-width="1.1"/>
<rect x="417.1" y="426.3" width="6" height="31.6" fill="#ff4500"/>
<path d="M429.1 419.2V469.8" stroke="#2b8c14" stroke-width="1.1"/>
<rect x="426.1" y="421.7" width="6" height="31.6" fill="#7fff00"/>
<path d="M438.0 447V510.2" stroke="#2b8c14" stroke-width="1.1"/>
<rect x="435.0" y="449.5" width="6" height="54.9" fill="#7fff00"/>
<path d="M447.0 495V512.7" stroke="#a02e08" stroke-width="1.1"/>
<rect x="444.0" y="496.8" width="6" height="7.6" fill="#ff4500"/>
<path d="M456.0 472V500" stroke="#a02e08" stroke-width="1.1"/>
<rect x="453.0" y="474.8" width="6" height="23.5" fill="#ff4500"/>
<path d="M465.0 458.4V491.3" stroke="#a02e08" stroke-width="1.1"/>
<rect x="462.0" y="468" width="6" height="6.8" fill="#ff4500"/>
<path d="M474.0 452V477.3" stroke="#a02e08" stroke-width="1.1"/>
<rect x="471.0" y="461.6" width="6" height="1.2" fill="#ff4500"/>
<path d="M482.9 458.9V484.2" stroke="#2b8c14" stroke-width="1.1"/>
<rect x="479.9" y="462.2" width="6" height="10.1" fill="#7fff00"/>
<path d="M491.9 466V485.7" stroke="#2b8c14" stroke-width="1.1"/>
<rect x="488.9" y="471" width="6" height="5.6" fill="#7fff00"/>
<path d="M500.9 449.5V477.3" stroke="#a02e08" stroke-width="1.1"/>
<rect x="497.9" y="453.8" width="6" height="23.0" fill="#ff4500"/>
<path d="M509.9 435.3V460.2" stroke="#a02e08" stroke-width="1.1"/>
<rect x="506.9" y="438.4" width="6" height="16.1" fill="#ff4500"/>
<path d="M518.9 436.8V448" stroke="#2b8c14" stroke-width="1.1"/>
<rect x="515.9" y="440.6" width="6" height="2.6" fill="#7fff00"/>
<path d="M527.8 392V440.6" stroke="#a02e08" stroke-width="1.1"/>
<rect x="524.8" y="399.2" width="6" height="36.8" fill="#ff4500"/>
<path d="M536.8 374V403.2" stroke="#a02e08" stroke-width="1.1"/>
<rect x="533.8" y="377.2" width="6" height="21.0" fill="#ff4500"/>
<path d="M545.8 350.6V393" stroke="#a02e08" stroke-width="1.1"/>
<rect x="542.8" y="359.8" width="6" height="19.4" fill="#ff4500"/>
<path d="M554.8 306.8V360.5" stroke="#a02e08" stroke-width="1.1"/>
<rect x="551.8" y="309.8" width="6" height="48.6" fill="#ff4500"/>
<path d="M563.8 209.4V291.6" stroke="#a02e08" stroke-width="1.1"/>
<rect x="560.8" y="275.7" width="6" height="9.6" fill="#ff4500"/>
<path d="M572.7 261.3V350.5" stroke="#2b8c14" stroke-width="1.1"/>
<rect x="569.7" y="266.8" width="6" height="60.9" fill="#7fff00"/>
<path d="M581.7 282.7V349.6" stroke="#a02e08" stroke-width="1.1"/>
<rect x="578.7" y="314.3" width="6" height="13.4" fill="#ff4500"/>
<path d="M590.7 272V327" stroke="#a02e08" stroke-width="1.1"/>
<rect x="587.7" y="306.8" width="6" height="10.6" fill="#ff4500"/>
<path d="M599.7 303V483.6" stroke="#2b8c14" stroke-width="1.1"/>
<rect x="596.7" y="306" width="6" height="127.6" fill="#7fff00"/>
<path d="M608.7 375.4V456.3" stroke="#2b8c14" stroke-width="1.1"/>
<rect x="605.7" y="420.4" width="6" height="5.6" fill="#7fff00"/>
<path d="M617.6 299V431" stroke="#a02e08" stroke-width="1.1"/>
<rect x="614.6" y="314.9" width="6" height="114.4" fill="#ff4500"/>
<path d="M626.6 289V334.6" stroke="#2b8c14" stroke-width="1.1"/>
<rect x="623.6" y="316" width="6" height="7.7" fill="#7fff00"/>
<path d="M635.6 240.5V327" stroke="#a02e08" stroke-width="1.1"/>
<rect x="632.6" y="246.8" width="6" height="73.2" fill="#ff4500"/>
<path d="M644.6 201.8V314.3" stroke="#a02e08" stroke-width="1.1"/>
<rect x="641.6" y="243.4" width="6" height="2.3" fill="#ff4500"/>
<path d="M653.6 179.8V280.2" stroke="#2b8c14" stroke-width="1.1"/>
<rect x="650.6" y="201" width="6" height="29.4" fill="#7fff00"/>
<path d="M662.5 229.6V314.3" stroke="#2b8c14" stroke-width="1.1"/>
<rect x="659.5" y="231.4" width="6" height="64.7" fill="#7fff00"/>
<path d="M671.5 248.1V330.8" stroke="#2b8c14" stroke-width="1.1"/>
<rect x="668.5" y="296.1" width="6" height="32.2" fill="#7fff00"/>
<path d="M680.5 299V488" stroke="#2b8c14" stroke-width="1.1"/>
<rect x="677.5" y="328.3" width="6" height="125.5" fill="#7fff00"/>
<path d="M689.5 406.2V539" stroke="#2b8c14" stroke-width="1.1"/>
<rect x="686.5" y="455" width="6" height="84.0" fill="#7fff00"/>
<path d="M698.5 456.3V539" stroke="#2b8c14" stroke-width="1.1"/>
<rect x="695.5" y="478.6" width="6" height="60.4" fill="#7fff00"/>
</g>
<path d="M324 156h6.4l-3.2 3.6z" fill="#fff"/>
<text x="332.7" y="160.6" font-family='"Liberation Sans","Noto Sans CJK TC",sans-serif' font-size="8.2" fill="#fff" textLength="55" lengthAdjust="spacingAndGlyphs">XAUUSD-2,Daily</text>
<text x="392.3" y="160.6" font-family='"Liberation Sans","Noto Sans CJK TC",sans-serif' font-size="8.2" fill="#fff" textLength="141.5" lengthAdjust="spacingAndGlyphs">1509.556 1519.031 1485.101 1487.366</text>
<text x="330" y="173.3" font-family='"Liberation Serif","Noto Serif CJK SC",serif' font-size="11" font-weight="300" fill="#dcdcdc" textLength="60.5" lengthAdjust="spacingAndGlyphs">杅擂腔奀潔:</text>
<text x="396.5" y="173.3" font-family='"Liberation Serif","Noto Serif CJK SC",serif' font-size="11" font-weight="300" fill="#dcdcdc" textLength="55" lengthAdjust="spacingAndGlyphs">2020.03.17</text>
<text x="457.5" y="173.3" font-family='"Liberation Serif","Noto Serif CJK SC",serif' font-size="11" font-weight="300" fill="#dcdcdc" textLength="27.5" lengthAdjust="spacingAndGlyphs">04:15</text>
<text x="330" y="184.6" font-family='"Liberation Serif","Noto Serif CJK SC",serif' font-size="11" font-weight="300" fill="#dcdcdc" textLength="11" lengthAdjust="spacingAndGlyphs">鎗</text>
<text x="352" y="184.6" font-family='"Liberation Serif","Noto Serif CJK SC",serif' font-size="11" font-weight="300" fill="#dcdcdc" textLength="11" lengthAdjust="spacingAndGlyphs">帤</text>
<text x="374" y="184.6" font-family='"Liberation Serif","Noto Serif CJK SC",serif' font-size="11" font-weight="300" fill="#dcdcdc" textLength="33" lengthAdjust="spacingAndGlyphs">累弇ㄩ</text>
<text x="407.5" y="184.6" font-family='"Liberation Serif","Noto Serif CJK SC",serif' font-size="11" font-weight="300" fill="#dcdcdc" textLength="28" lengthAdjust="spacingAndGlyphs">62.8%</text>
<text x="441" y="184.6" font-family='"Liberation Serif","Noto Serif CJK SC",serif' font-size="11" font-weight="300" fill="#dcdcdc" textLength="33" lengthAdjust="spacingAndGlyphs">闖堤帤</text>
<text x="487.5" y="184.6" font-family='"Liberation Serif","Noto Serif CJK SC",serif' font-size="11" font-weight="300" fill="#dcdcdc" textLength="33" lengthAdjust="spacingAndGlyphs">累弇ㄩ</text>
<text x="521" y="184.6" font-family='"Liberation Serif","Noto Serif CJK SC",serif' font-size="11" font-weight="300" fill="#dcdcdc" textLength="28" lengthAdjust="spacingAndGlyphs">37.2%</text>
<text x="522.2" y="195.2" font-family='"Liberation Serif","Noto Serif CJK SC",serif' font-size="11" font-weight="300" fill="#dcdcdc" textLength="88.5" lengthAdjust="spacingAndGlyphs">湮講闖堤帤賦隆等</text>
<text x="611.3" y="195.2" font-family='"Liberation Serif","Noto Serif CJK SC",serif' font-size="11" font-weight="300" fill="#dcdcdc" textLength="94.7" lengthAdjust="spacingAndGlyphs">(1700.00-1700.50)</text>
<text x="522.2" y="302.7" font-family='"Liberation Serif","Noto Serif CJK SC",serif' font-size="11" font-weight="300" fill="#dcdcdc" textLength="88.5" lengthAdjust="spacingAndGlyphs">湮講闖堤帤賦隆等</text>
<text x="611.3" y="302.7" font-family='"Liberation Serif","Noto Serif CJK SC",serif' font-size="11" font-weight="300" fill="#dcdcdc" textLength="94.7" lengthAdjust="spacingAndGlyphs">(1650.00-1650.50)</text>
<path d="M719.5 153h8l-4 4.2z" fill="#c8c8c8"/>
<text x="808.7" y="162.4" text-anchor="end" font-family='"Liberation Sans","Noto Sans CJK TC",sans-serif' font-size="8.2" fill="#fff" textLength="71" lengthAdjust="spacingAndGlyphs">OANDA_Orderbook2</text>
<circle cx="817" cy="159.7" r="4.6" fill="none" stroke="#e8e8e8" stroke-width="0.9"/><path d="M814.6 160.6q2.4 2.6 4.8 0" stroke="#e8e8e8" stroke-width="0.8" fill="none"/><circle cx="815.4" cy="158.3" r="0.6" fill="#e8e8e8"/><circle cx="818.6" cy="158.3" r="0.6" fill="#e8e8e8"/>
</svg>
<div class="abs" style="left:869px;top:150px;width:1px;height:389px;background:#c8d4e4"></div>
<div class="abs" style="left:312.6px;top:538.4px;width:558px;height:18.1px;background:#f0f0f0;border-top:1px solid #a8a8a8;box-sizing:border-box"></div>
<div class="abs" style="left:324.4px;top:541.4px;font-size:11.5px;line-height:14px;color:#8c8c8c;white-space:nowrap;letter-spacing:-.56px" id="ctab">XAUUSD-2,Daily</div>
<div class="abs" style="left:413.6px;top:538.8px;width:58px;height:17.4px;background:#fff;border:1px solid #6a6a6a;border-top:none;box-sizing:border-box;font-size:11.5px;line-height:16.4px;text-align:center;color:#333;letter-spacing:-.2px">Connect</div>

<!-- terminal -->
<div class="abs" style="left:36px;top:556px;width:834px;height:314px;background:#f0f0f0"></div>
<div class="abs" style="left:36px;top:556px;width:834px;height:1px;background:#c9c9c9"></div>
<div class="abs" style="left:49px;top:560.4px;width:821px;height:20.4px;background:#fff;border:1px solid #cfcfcf;border-right:none;box-sizing:border-box"></div>
<div class="px" style="left:37.6px;top:560.4px">×</div>
<div class="abs" style="left:38px;top:573px;width:8px;height:3px;border-top:1px dotted #8a8fb0;border-bottom:1px dotted #8a8fb0"></div>
<div class="abs" style="left:52.6px;top:567.6px;width:5.2px;height:5.2px;border-radius:50%;background:#bdbdbd;border:1px solid #8a8a8a;box-sizing:border-box"></div>
<div class="abs tl" style="left:63.8px;top:563.4px;font-size:10.6px;line-height:14px;white-space:pre;color:#2a2a2a;letter-spacing:-0.136px">餘額: 119.69 USD</div>
<div class="abs tl" style="left:153px;top:563.4px;font-size:10.6px;line-height:14px;white-space:pre;color:#2a2a2a;letter-spacing:-0.051px">盈/虧: -12.65</div>
<div class="abs tl" style="left:218.3px;top:563.4px;font-size:10.6px;line-height:14px;white-space:pre;color:#2a2a2a;letter-spacing:-0.158px">淨值: 107.04</div>
<div class="abs tl" style="left:283.5px;top:563.4px;font-size:10.6px;line-height:14px;white-space:pre;color:#2a2a2a;letter-spacing:-0.276px">已用預付款: 112.07</div>
<div class="abs tl" style="left:377.7px;top:563.4px;font-size:10.6px;line-height:14px;white-space:pre;color:#2a2a2a;letter-spacing:-0.335px">可用預付款: -5.03</div>
<div class="abs tl" style="left:463.3px;top:563.4px;font-size:10.6px;line-height:14px;white-space:pre;color:#2a2a2a;letter-spacing:-0.369px">預付款比例: 95.51%</div>
<div class="abs" style="left:36px;top:582.6px;width:834px;height:1px;background:#cfcfcf"></div>
<div class="px" style="left:37.6px;top:586.4px">×</div>
<div class="abs" style="left:36px;top:599.4px;width:11px;height:271px;background:linear-gradient(90deg,#c3d5ea,#a9c4e2 60%,#9dbbdc)"></div>
<div class="abs" style="left:47px;top:588px;width:3px;height:282px;background:#fbfbfb"></div>
<svg class="abs" style="left:50px;top:588px" width="820" height="282" viewBox="50 588 820 282">
<rect x="50" y="588" width="820" height="282" fill="#fff"/>
<path d="M78.3 589V857 M105.2 589V857 M132.2 589V857 M159.1 589V857 M186.0 589V857 M212.9 589V857 M239.9 589V857 M266.8 589V857 M293.7 589V857 M320.7 589V857 M347.6 589V857 M374.5 589V857 M401.5 589V857 M428.4 589V857 M455.3 589V857 M482.2 589V857 M509.2 589V857 M536.1 589V857 M563.0 589V857 M590.0 589V857 M616.9 589V857 M643.8 589V857 M670.8 589V857 M697.7 589V857 M724.6 589V857 M751.5 589V857 M778.5 589V857 M805.4 589V857 M832.3 589V857 M859.3 589V857 M51 617.0H870 M51 643.6H870 M51 670.2H870 M51 696.8H870 M51 723.4H870 M51 750.0H870 M51 776.6H870 M51 803.2H870 M51 829.8H870 M51 856.4H870" stroke="#e6e6e6" stroke-width="1" stroke-dasharray="1.5 1.5" fill="none"/>
<path d="M50 588.5H870" stroke="#8c8c8c" stroke-width="1" fill="none"/><path d="M50.5 588V858M50 857.5H870" stroke="#4a4a4a" stroke-width="1" fill="none"/>
<path d="M51.4 857v3" stroke="#555" stroke-width="1"/>
<text x="51.6" y="868.8" font-family='"Liberation Sans","Noto Sans CJK TC",sans-serif' font-size="8.5" fill="#222">0</text>
<path d="M78.3 857v3" stroke="#555" stroke-width="1"/>
<text x="77.7" y="868.8" text-anchor="end" font-family='"Liberation Sans","Noto Sans CJK TC",sans-serif' font-size="8.5" fill="#222">20</text>
<path d="M105.2 857v3" stroke="#555" stroke-width="1"/>
<text x="104.6" y="868.8" text-anchor="end" font-family='"Liberation Sans","Noto Sans CJK TC",sans-serif' font-size="8.5" fill="#222">38</text>
<path d="M132.2 857v3" stroke="#555" stroke-width="1"/>
<text x="131.6" y="868.8" text-anchor="end" font-family='"Liberation Sans","Noto Sans CJK TC",sans-serif' font-size="8.5" fill="#222">56</text>
<path d="M159.1 857v3" stroke="#555" stroke-width="1"/>
<text x="158.5" y="868.8" text-anchor="end" font-family='"Liberation Sans","Noto Sans CJK TC",sans-serif' font-size="8.5" fill="#222">75</text>
<path d="M186.0 857v3" stroke="#555" stroke-width="1"/>
<text x="185.4" y="868.8" text-anchor="end" font-family='"Liberation Sans","Noto Sans CJK TC",sans-serif' font-size="8.5" fill="#222">93</text>
<path d="M212.9 857v3" stroke="#555" stroke-width="1"/>
<text x="212.3" y="868.8" text-anchor="end" font-family='"Liberation Sans","Noto Sans CJK TC",sans-serif' font-size="8.5" fill="#222">111</text>
<path d="M239.9 857v3" stroke="#555" stroke-width="1"/>
<text x="239.3" y="868.8" text-anchor="end" font-family='"Liberation Sans","Noto Sans CJK TC",sans-serif' font-size="8.5" fill="#222">129</text>
<path d="M266.8 857v3" stroke="#555" stroke-width="1"/>
<text x="266.2" y="868.8" text-anchor="end" font-family='"Liberation Sans","Noto Sans CJK TC",sans-serif' font-size="8.5" fill="#222">148</text>
<path d="M293.7 857v3" stroke="#555" stroke-width="1"/>
<text x="293.1" y="868.8" text-anchor="end" font-family='"Liberation Sans","Noto Sans CJK TC",sans-serif' font-size="8.5" fill="#222">166</text>
<path d="M320.7 857v3" stroke="#555" stroke-width="1"/>
<text x="320.1" y="868.8" text-anchor="end" font-family='"Liberation Sans","Noto Sans CJK TC",sans-serif' font-size="8.5" fill="#222">184</text>
<path d="M347.6 857v3" stroke="#555" stroke-width="1"/>
<text x="347.0" y="868.8" text-anchor="end" font-family='"Liberation Sans","Noto Sans CJK TC",sans-serif' font-size="8.5" fill="#222">202</text>
<path d="M374.5 857v3" stroke="#555" stroke-width="1"/>
<text x="373.9" y="868.8" text-anchor="end" font-family='"Liberation Sans","Noto Sans CJK TC",sans-serif' font-size="8.5" fill="#222">221</text>
<path d="M401.5 857v3" stroke="#555" stroke-width="1"/>
<text x="400.9" y="868.8" text-anchor="end" font-family='"Liberation Sans","Noto Sans CJK TC",sans-serif' font-size="8.5" fill="#222">239</text>
<path d="M428.4 857v3" stroke="#555" stroke-width="1"/>
<text x="427.8" y="868.8" text-anchor="end" font-family='"Liberation Sans","Noto Sans CJK TC",sans-serif' font-size="8.5" fill="#222">257</text>
<path d="M455.3 857v3" stroke="#555" stroke-width="1"/>
<text x="454.7" y="868.8" text-anchor="end" font-family='"Liberation Sans","Noto Sans CJK TC",sans-serif' font-size="8.5" fill="#222">275</text>
<path d="M482.2 857v3" stroke="#555" stroke-width="1"/>
<text x="481.6" y="868.8" text-anchor="end" font-family='"Liberation Sans","Noto Sans CJK TC",sans-serif' font-size="8.5" fill="#222">294</text>
<path d="M509.2 857v3" stroke="#555" stroke-width="1"/>
<text x="508.6" y="868.8" text-anchor="end" font-family='"Liberation Sans","Noto Sans CJK TC",sans-serif' font-size="8.5" fill="#222">312</text>
<path d="M536.1 857v3" stroke="#555" stroke-width="1"/>
<text x="535.5" y="868.8" text-anchor="end" font-family='"Liberation Sans","Noto Sans CJK TC",sans-serif' font-size="8.5" fill="#222">330</text>
<path d="M563.0 857v3" stroke="#555" stroke-width="1"/>
<text x="562.4" y="868.8" text-anchor="end" font-family='"Liberation Sans","Noto Sans CJK TC",sans-serif' font-size="8.5" fill="#222">348</text>
<path d="M590.0 857v3" stroke="#555" stroke-width="1"/>
<text x="589.4" y="868.8" text-anchor="end" font-family='"Liberation Sans","Noto Sans CJK TC",sans-serif' font-size="8.5" fill="#222">367</text>
<path d="M616.9 857v3" stroke="#555" stroke-width="1"/>
<text x="616.3" y="868.8" text-anchor="end" font-family='"Liberation Sans","Noto Sans CJK TC",sans-serif' font-size="8.5" fill="#222">385</text>
<path d="M643.8 857v3" stroke="#555" stroke-width="1"/>
<text x="643.2" y="868.8" text-anchor="end" font-family='"Liberation Sans","Noto Sans CJK TC",sans-serif' font-size="8.5" fill="#222">403</text>
<path d="M670.8 857v3" stroke="#555" stroke-width="1"/>
<text x="670.2" y="868.8" text-anchor="end" font-family='"Liberation Sans","Noto Sans CJK TC",sans-serif' font-size="8.5" fill="#222">421</text>
<path d="M697.7 857v3" stroke="#555" stroke-width="1"/>
<text x="697.1" y="868.8" text-anchor="end" font-family='"Liberation Sans","Noto Sans CJK TC",sans-serif' font-size="8.5" fill="#222">440</text>
<path d="M724.6 857v3" stroke="#555" stroke-width="1"/>
<text x="724.0" y="868.8" text-anchor="end" font-family='"Liberation Sans","Noto Sans CJK TC",sans-serif' font-size="8.5" fill="#222">458</text>
<path d="M751.5 857v3" stroke="#555" stroke-width="1"/>
<text x="750.9" y="868.8" text-anchor="end" font-family='"Liberation Sans","Noto Sans CJK TC",sans-serif' font-size="8.5" fill="#222">476</text>
<path d="M778.5 857v3" stroke="#555" stroke-width="1"/>
<text x="777.9" y="868.8" text-anchor="end" font-family='"Liberation Sans","Noto Sans CJK TC",sans-serif' font-size="8.5" fill="#222">494</text>
<path d="M805.4 857v3" stroke="#555" stroke-width="1"/>
<text x="804.8" y="868.8" text-anchor="end" font-family='"Liberation Sans","Noto Sans CJK TC",sans-serif' font-size="8.5" fill="#222">513</text>
<path d="M832.3 857v3" stroke="#555" stroke-width="1"/>
<text x="831.7" y="868.8" text-anchor="end" font-family='"Liberation Sans","Noto Sans CJK TC",sans-serif' font-size="8.5" fill="#222">531</text>
<path d="M859.3 857v3" stroke="#555" stroke-width="1"/>
<text x="858.7" y="868.8" text-anchor="end" font-family='"Liberation Sans","Noto Sans CJK TC",sans-serif' font-size="8.5" fill="#222">549</text>
<polyline points="51.2,761.2 52.4,761.2 53.6,761.2 54.8,761.8 56.0,764.1 57.2,768.0 58.4,769.4 59.6,769.1 60.8,763.6 62.0,760.0 63.2,756.4 64.4,756.4 65.6,757.0 66.8,758.3 68.0,759.2 69.2,759.3 70.4,758.8 71.6,758.7 72.8,758.6 74.0,757.9 75.2,757.3 76.4,756.7 77.6,756.7 78.8,757.5 80.0,758.5 81.2,759.0 82.4,758.4 83.6,757.1 84.8,756.3 86.0,754.6 87.2,751.4 88.4,748.2 89.6,746.2 90.8,746.1 92.0,746.1 93.2,746.1 94.4,744.6 95.6,743.1 96.8,741.6 98.0,741.6 99.2,741.7 100.4,741.6 101.6,741.5 102.8,741.2 104.0,741.2 105.2,741.4 106.4,742.6 107.6,743.9 108.8,743.9 110.0,742.9 111.2,741.9 112.4,740.9 113.6,739.6 114.8,737.8 116.0,737.0 117.2,736.4 118.4,736.4 119.6,736.5 120.8,737.9 122.0,740.0 123.2,741.2 124.4,741.1 125.6,740.2 126.8,739.7 128.0,739.3 129.2,738.3 130.4,737.7 131.6,736.9 132.8,736.7 134.0,736.6 135.2,736.6 136.4,736.8 137.6,738.4 138.8,736.7 140.0,734.1 141.2,730.2 142.4,728.8 143.6,728.0 144.8,727.2 146.0,726.9 147.2,725.2 148.4,723.5 149.6,721.5 150.8,721.1 152.0,720.6 153.2,720.6 154.4,720.6 155.6,720.6 156.8,718.2 158.0,715.8 159.2,713.2 160.4,713.0 161.6,712.8 162.8,712.8 164.0,713.0 165.2,715.0 166.4,718.4 167.6,720.1 168.8,720.1 170.0,718.6 171.2,718.6 172.4,720.1 173.6,723.2 174.8,726.7 176.0,728.2 177.2,728.3 178.4,727.8 179.6,727.8 180.8,726.4 182.0,724.9 183.2,723.4 184.4,723.4 185.6,724.9 186.8,723.3 188.0,720.7 189.2,716.6 190.4,715.6 191.6,715.6 192.8,716.9 194.0,718.2 195.2,719.5 196.4,720.0 197.6,722.1 198.8,725.7 200.0,727.5 201.2,727.7 202.4,726.4 203.6,726.4 204.8,727.5 206.0,728.6 207.2,729.7 208.4,730.7 209.6,733.3 210.8,737.5 212.0,741.7 213.2,744.2 214.4,745.2 215.6,746.5 216.8,748.0 218.0,749.5 219.2,749.7 220.4,749.9 221.6,750.1 222.8,750.2 224.0,751.8 225.2,754.9 226.4,759.6 227.6,763.5 228.8,765.9 230.0,766.7 231.2,768.2 232.4,769.8 233.6,771.3 234.8,772.1 236.0,774.0 237.2,773.5 238.4,770.8 239.6,766.9 240.8,765.4 242.0,765.4 243.2,766.9 244.4,768.3 245.6,769.6 246.8,769.3 248.0,769.3 249.2,769.3 250.4,770.7 251.6,770.7 252.8,767.9 254.0,763.6 255.2,759.9 256.4,757.5 257.6,755.0 258.8,753.5 260.0,753.5 261.2,753.7 262.4,754.3 263.6,754.6 264.8,754.6 266.0,754.4 267.2,754.4 268.4,756.0 269.6,759.2 270.8,760.7 272.0,760.6 273.2,758.0 274.4,757.3 275.6,756.5 276.8,756.5 278.0,757.5 279.2,759.2 280.4,761.0 281.6,761.7 282.8,759.2 284.0,755.2 285.2,751.1 286.4,749.6 287.6,749.6 288.8,751.2 290.0,754.5 291.2,759.4 292.4,761.8 293.6,762.6 294.8,761.8 296.0,761.8 297.2,762.3 298.4,763.4 299.6,762.5 300.8,761.2 302.0,758.9 303.2,758.5 304.4,758.1 305.6,758.1 306.8,758.3 308.0,758.6 309.2,759.6 310.4,761.5 311.6,762.4 312.8,762.7 314.0,761.8 315.2,761.8 316.4,761.8 317.6,760.9 318.8,760.0 320.0,759.1 321.2,759.1 322.4,760.7 323.6,763.8 324.8,768.6 326.0,772.5 327.2,773.6 328.4,773.1 329.6,771.0 330.8,770.2 332.0,769.3 333.2,769.1 334.4,769.0 335.6,769.0 336.8,769.8 338.0,772.2 339.2,775.8 340.4,778.5 341.6,779.7 342.8,779.6 344.0,779.5 345.2,778.9 346.4,777.2 347.6,775.5 348.8,774.3 350.0,774.3 351.2,775.9 352.4,779.0 353.6,782.5 354.8,784.4 356.0,783.2 357.2,778.9 358.4,774.4 359.6,771.2 360.8,770.4 362.0,769.8 363.2,769.4 364.4,769.4 365.6,771.0 366.8,774.1 368.0,777.9 369.2,780.1 370.4,781.4 371.6,782.2 372.8,782.4 374.0,781.5 375.2,780.1 376.4,779.2 377.6,778.0 378.8,777.3 380.0,776.6 381.2,776.5 382.4,776.3 383.6,776.1 384.8,776.1 386.0,777.6 387.2,779.8 388.4,781.4 389.6,781.5 390.8,780.2 392.0,779.5 393.2,778.8 394.4,778.7 395.6,778.5 396.8,777.6 398.0,776.8 399.2,776.0 400.4,776.0 401.6,776.0 402.8,775.0 404.0,773.9 405.2,772.8 406.4,772.8 407.6,774.2 408.8,776.0 410.0,777.9 411.2,778.3 412.4,779.8 413.6,782.4 414.8,783.6 416.0,783.4 417.2,782.1 418.4,782.1 419.6,783.5 420.8,786.4 422.0,789.9 423.2,792.0 424.4,792.7 425.6,791.4 426.8,787.2 428.0,783.1 429.2,780.2 430.4,780.2 431.6,776.9 432.8,772.9 434.0,768.8 435.2,766.7 436.4,765.5 437.6,764.3 438.8,764.3 440.0,764.2 441.2,763.5 442.4,762.8 443.6,762.1 444.8,762.1 446.0,761.3 447.2,757.0 448.4,752.7 449.6,749.1 450.8,749.1 452.0,749.2 453.2,749.3 454.4,749.9 455.6,751.9 456.8,753.6 458.0,754.5 459.2,753.9 460.4,753.5 461.6,753.5 462.8,754.8 464.0,756.6 465.2,758.4 466.4,759.0 467.6,760.5 468.8,761.3 470.0,762.2 471.2,761.4 472.4,761.4 473.6,762.0 474.8,763.9 476.0,767.2 477.2,770.5 478.4,772.4 479.6,773.2 480.8,771.7 482.0,770.3 483.2,768.5 484.4,768.1 485.6,767.8 486.8,767.4 488.0,767.4 489.2,768.9 490.4,771.1 491.6,773.2 492.8,774.1 494.0,775.3 495.2,776.5 496.4,777.5 497.6,778.6 498.8,781.1 500.0,784.6 501.2,786.6 502.4,785.5 503.6,782.9 504.8,780.7 506.0,780.2 507.2,780.2 508.4,781.7 509.6,781.5 510.8,781.4 512.0,779.8 513.2,779.8 514.4,781.4 515.6,781.6 516.8,781.7 518.0,779.2 519.2,776.5 520.4,773.8 521.6,772.2 522.8,772.2 524.0,772.6 525.2,774.5 526.4,778.0 527.6,779.4 528.8,779.4 530.0,776.9 531.2,775.9 532.4,774.8 533.6,774.8 534.8,774.7 536.0,774.3 537.2,773.9 538.4,773.4 539.6,773.4 540.8,774.8 542.0,776.9 543.2,779.0 544.4,779.8 545.6,781.2 546.8,782.7 548.0,783.6 549.2,783.1 550.4,782.6 551.6,782.6 552.8,784.3 554.0,787.7 555.2,791.1 556.4,792.2 557.6,791.6 558.8,791.1 560.0,791.1 561.2,792.7 562.4,795.8 563.6,799.5 564.8,801.2 566.0,799.7 567.2,796.9 568.4,794.6 569.6,793.8 570.8,793.8 572.0,791.1 573.2,787.2 574.4,783.2 575.6,781.9 576.8,781.9 578.0,781.3 579.2,780.4 580.4,778.6 581.6,773.8 582.8,769.4 584.0,765.9 585.2,765.9 586.4,767.3 587.6,769.4 588.8,771.5 590.0,772.9 591.2,775.1 592.4,778.9 593.6,779.9 594.8,779.4 596.0,776.7 597.2,776.1 598.4,775.4 599.6,775.4 600.8,777.0 602.0,778.5 603.2,779.5 604.4,778.9 605.6,778.3 606.8,775.8 608.0,773.2 609.2,770.1 610.4,769.6 611.6,769.1 612.8,769.1 614.0,769.8 615.2,772.1 616.4,775.8 617.6,778.8 618.8,780.3 620.0,781.1 621.2,783.4 622.4,787.2 623.6,791.8 624.8,795.1 626.0,796.9 627.2,797.7 628.4,800.0 629.6,803.2 630.8,805.8 632.0,806.7 633.2,807.9 634.4,809.0 635.6,810.2 636.8,810.2 638.0,810.7 639.2,810.6 640.4,810.4 641.6,809.7 642.8,809.7 644.0,807.3 645.2,804.9 646.4,802.4 647.6,802.1 648.8,801.9 650.0,801.9 651.2,803.1 652.4,805.8 653.6,810.3 654.8,814.8 656.0,817.8 657.2,817.9 658.4,815.4 659.6,812.9 660.8,810.8 662.0,808.3 663.2,805.7 664.4,803.8 665.6,803.6 666.8,803.6 668.0,805.2 669.2,808.3 670.4,811.5 671.6,813.2 672.8,813.8 674.0,815.4 675.2,816.9 676.4,817.9 677.6,818.7 678.8,820.1 680.0,821.6 681.2,822.2 682.4,823.2 683.6,824.9 684.8,826.1 686.0,826.4 687.2,826.0 688.4,826.0 689.6,824.1 690.8,822.3 692.0,819.6 693.2,818.9 694.4,818.1 695.6,818.1 696.8,819.5 698.0,822.5 699.2,827.1 700.4,832.0 701.6,833.3 702.8,830.4 704.0,823.5 705.2,818.6 706.4,816.3 707.6,816.3 708.8,817.7 710.0,819.8 711.2,821.2 712.4,821.0 713.6,818.3 714.8,814.3 716.0,810.2 717.2,807.7 718.4,807.2 719.6,806.7 720.8,806.7 722.0,807.9 723.2,809.4 724.4,807.8 725.6,804.9 726.8,801.7 728.0,801.7 729.2,799.0 730.4,796.2 731.6,793.5 732.8,793.5 734.0,794.9 735.2,797.2 736.4,799.6 737.6,800.7 738.8,802.4 740.0,803.3 741.2,802.4 742.4,798.7 743.6,795.7 744.8,794.5 746.0,794.5 747.2,796.2 748.4,796.2 749.6,793.9 750.8,789.8 752.0,787.5 753.2,787.5 754.4,785.6 755.6,783.6 756.8,781.7 758.0,781.7 759.2,781.8 760.4,781.4 761.6,781.0 762.8,780.4 764.0,780.0 765.2,776.6 766.4,772.6 767.6,769.0 768.8,768.3 770.0,768.3 771.2,770.0 772.4,771.1 773.6,770.4 774.8,767.2 776.0,764.5 777.2,763.6 778.4,763.4 779.6,761.5 780.8,759.7 782.0,758.0 783.2,758.0 784.4,757.2 785.6,756.5 786.8,755.4 788.0,754.7 789.2,754.1 790.4,753.7 791.6,753.7 792.8,755.1 794.0,756.5 795.2,754.5 796.4,751.1 797.6,747.3 798.8,745.5 800.0,742.4 801.2,739.6 802.4,738.1 803.6,737.7 804.8,736.9 806.0,736.5 807.2,736.1 808.4,736.1 809.6,736.1 810.8,736.1 812.0,736.1 813.2,733.8 814.4,731.6 815.6,729.3 816.8,729.3 818.0,729.1 819.2,728.3 820.4,727.5 821.6,727.0 822.8,726.1 824.0,724.1 825.2,722.1 826.4,720.2 827.6,719.3 828.8,718.4 830.0,718.4 831.2,720.0 832.4,722.1 833.6,723.5 834.8,723.3 836.0,722.3 837.2,722.0 838.4,721.7 839.6,721.4 840.8,721.2 842.0,720.2 843.2,719.4 844.4,718.6 845.6,718.6 846.8,718.7 848.0,717.7 849.2,716.7 850.4,715.7 851.6,715.7 852.8,716.9 854.0,719.7 855.2,723.9 856.4,728.4 857.6,731.7 858.8,733.5 860.0,733.9 861.2,735.5 862.4,738.9 863.6,742.9 864.8,744.3 866.0,744.0 867.2,743.0 868.4,743.0 869.6,743.0" fill="none" stroke="#66dd66" stroke-width="0.9"/>
<polyline points="51.2,765.1 52.8,758.8 55.6,770.8 59.0,782.2 60.6,765.7 61.7,769.5 63.4,753.7 65.7,762.6 67.2,758.4 68.6,761.9 70.1,757.5 71.8,760.7 73.3,756.3 74.8,759.4 76.8,755.0 80.9,771.4 82.8,755.6 84.0,758.2 85.7,754.4 87.2,757.5 89.7,744.9 91.0,748.7 92.5,743.6 95.4,754.4 97.1,737.9 101.7,754.4 103.0,737.9 106.2,747.4 108.1,743.0 109.9,746.8 111.2,741.1 113.4,751.8 115.0,736.0 116.3,737.9 117.8,734.1 121.1,744.2 122.6,740.5 123.9,743.6 125.4,739.2 127.0,741.7 128.7,737.3 130.2,739.8 131.7,736.0 133.0,738.6 134.6,734.1 138.8,750.6 141.6,727.2 143.1,730.3 144.7,725.9 147.0,736.7 149.1,720.2 150.7,723.4 152.3,719.0 153.9,722.1 155.0,717.2 157.5,727.9 158.8,711.5 160.3,715.9 162.2,710.2 167.6,733.0 169.5,715.9 174.0,733.0 175.9,727.9 176.7,731.1 178.1,726.0 181.2,736.8 182.6,720.3 186.9,736.8 189.8,712.8 192.9,722.9 194.4,717.2 200.3,739.9 201.8,723.5 204.9,734.2 206.2,727.9 211.9,750.7 213.2,744.4 216.7,755.7 217.8,748.2 219.5,753.8 221.1,747.5 227.1,770.9 228.6,765.2 231.2,774.7 232.7,769.6 235.9,780.4 237.8,774.7 238.7,777.2 240.3,762.7 244.8,779.8 247.3,765.9 250.4,777.2 252.1,771.5 253.4,774.7 254.9,758.9 256.1,763.3 259.3,750.7 263.5,767.4 265.2,750.3 270.8,773.1 273.4,756.7 274.4,759.8 275.7,755.4 279.1,765.5 280.3,760.5 282.9,771.2 286.0,747.2 293.0,775.6 295.1,758.6 299.0,775.6 301.8,757.9 303.1,761.7 304.4,757.3 305.6,761.1 307.3,756.7 309.4,767.4 311.1,762.4 312.3,765.5 313.8,760.5 315.4,764.2 317.0,759.2 318.3,763.0 319.9,757.9 327.1,786.4 329.0,769.3 330.3,773.1 331.8,768.0 333.0,771.8 334.7,767.4 339.1,783.8 340.6,778.2 341.9,781.9 343.5,776.9 346.5,787.6 348.2,771.2 352.4,787.6 354.3,781.9 356.6,792.1 360.0,768.0 361.2,771.8 362.9,767.4 366.9,783.2 368.4,778.8 372.5,795.1 374.4,778.7 375.7,781.8 377.2,776.8 378.6,780.6 380.1,775.5 381.6,779.3 383.3,774.2 386.2,785.0 387.7,780.6 389.0,783.7 390.5,779.3 391.7,782.5 393.4,777.4 394.7,781.2 396.3,776.1 397.6,779.9 399.3,774.9 400.7,778.7 402.2,773.6 403.5,777.4 405.1,771.7 408.3,782.5 409.8,776.8 414.2,793.2 417.0,780.6 421.6,797.0 423.4,791.3 426.0,802.1 429.4,778.0 431.7,788.8 434.5,765.4 436.0,769.2 437.6,763.5 439.3,767.3 440.8,762.2 442.1,766.0 443.7,761.0 446.9,772.4 449.6,748.3 450.9,752.8 452.4,747.1 457.0,764.1 459.8,750.9 463.3,761.6 464.6,755.9 468.9,772.4 471.5,759.1 476.2,775.5 477.7,770.5 480.5,780.5 483.3,767.2 484.6,771.0 486.6,765.9 489.6,776.7 490.9,771.0 493.8,781.7 495.4,776.0 499.5,791.8 501.1,786.8 502.4,790.6 505.6,777.9 510.2,795.0 511.9,778.6 515.9,795.0 518.2,777.9 519.1,781.7 522.0,769.7 527.9,791.8 529.6,776.0 530.8,779.2 532.4,774.1 533.6,777.9 535.1,772.9 536.4,776.7 538.1,771.6 541.2,782.4 542.5,776.7 545.6,787.4 547.3,782.4 548.5,785.5 550.1,780.5 553.9,796.9 555.4,791.2 557.0,795.6 558.7,789.9 562.9,806.4 564.6,800.7 565.9,805.1 569.3,791.8 572.2,803.2 575.1,779.2 577.9,789.9 581.0,776.7 582.3,780.5 583.9,764.7 586.7,774.8 587.9,770.2 593.8,792.3 596.1,775.9 597.1,779.7 598.4,774.6 602.8,791.7 605.0,774.6 607.2,785.3 609.4,768.3 610.7,772.1 611.9,767.0 616.3,784.1 617.9,778.4 623.7,800.5 625.2,794.8 629.2,811.3 630.9,805.6 633.8,816.3 635.6,809.4 638.2,820.7 641.2,807.5 644.2,818.2 646.1,800.5 647.3,805.6 649.0,800.5 654.6,823.3 656.2,817.6 657.4,822.0 661.2,809.4 662.2,813.2 665.0,800.5 669.2,816.9 670.7,811.3 673.9,822.0 675.4,816.3 678.5,826.4 680.2,820.7 683.1,831.5 684.6,825.8 685.9,829.6 687.4,824.5 689.9,834.6 692.2,818.2 693.2,822.0 694.5,816.9 701.6,846.0 706.3,815.1 709.2,825.8 710.7,820.1 712.1,824.5 713.6,819.5 714.9,823.3 716.8,806.2 718.0,810.0 719.7,805.6 724.1,822.0 727.1,798.6 729.8,808.7 731.5,792.3 734.5,803.0 735.7,797.4 739.9,813.8 744.6,792.9 748.7,810.0 751.8,786.0 755.1,797.4 756.8,780.9 758.1,784.7 759.7,779.7 761.0,783.4 762.5,778.4 765.0,788.5 768.2,765.1 772.3,781.8 776.9,761.7 779.8,772.0 781.5,755.3 784.4,766.3 787.2,753.0 788.4,755.9 790.1,751.9 793.3,762.8 794.7,757.6 795.9,761.7 797.8,745.0 799.3,749.0 802.2,737.0 803.3,740.4 804.5,735.8 805.9,739.3 807.4,734.7 808.7,738.1 810.2,733.5 813.7,743.9 815.4,727.8 818.3,738.1 821.1,724.3 824.0,735.2 825.7,718.6 827.1,722.0 828.6,716.8 831.5,728.3 833.0,722.0 834.4,726.6 835.7,720.9 837.2,725.5 838.7,719.7 840.1,724.3 841.5,718.6 843.0,723.2 844.5,717.4 845.9,722.0 847.2,716.3 848.7,720.9 850.5,714.5 856.8,738.1 858.5,731.8 864.0,754.8 866.9,741.0 870.0,753.6" fill="none" stroke="#1414b8" stroke-width="1.35" stroke-linejoin="round"/>
<text x="54.3" y="599.8" font-family='"Liberation Sans","Noto Sans CJK TC",sans-serif' font-size="8" textLength="209" lengthAdjust="spacingAndGlyphs"><tspan fill="#0808c8">餘額</tspan><tspan fill="#222"> / </tspan><tspan fill="#18c418">淨值</tspan><tspan fill="#222"> / </tspan><tspan fill="#f81010">僅用開盤價(以最快速的方法分析剛形成的柱線)</tspan></text>
</svg>
<svg class="abs" style="left:37px;top:863px" width="9" height="7" viewBox="0 0 9 7"><path d="M1 2.500l3 3.500 4-5" stroke="#333" stroke-width="1.400" fill="none"/></svg>

</div>
</body>
</html>
